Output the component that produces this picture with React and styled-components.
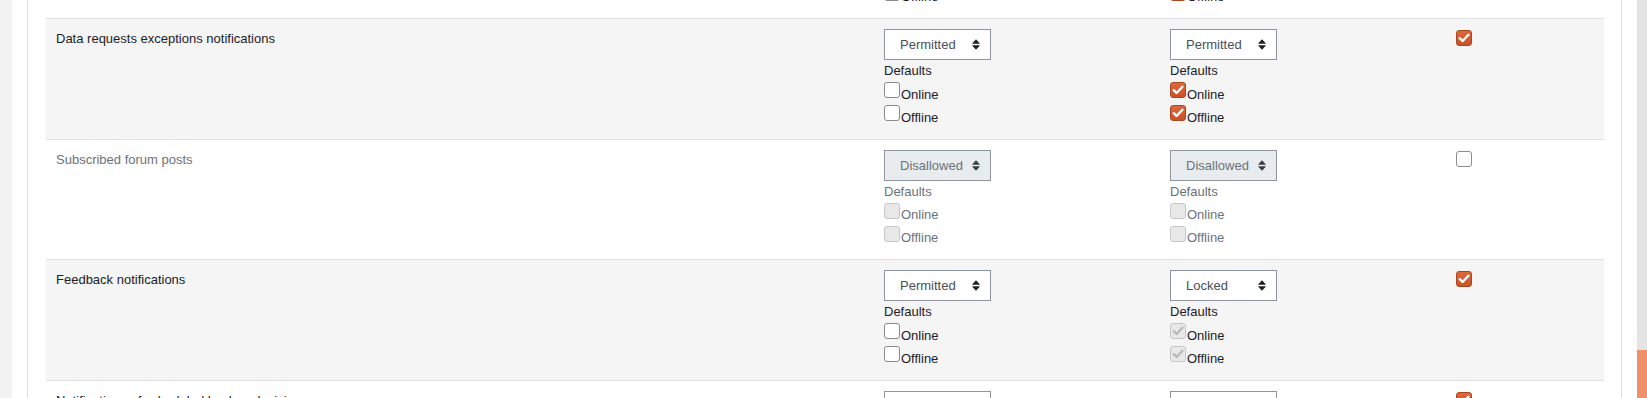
import React from "react";
import styled, { createGlobalStyle } from "styled-components";

const GlobalStyle = createGlobalStyle`
  html, body { margin: 0; padding: 0; background: #ffffff; overflow: hidden; }
  body { font-family: "Liberation Sans", Arial, sans-serif; font-size: 13px; color: #1d2125; }
`;

const Page = styled.div`
  display: flex;
  height: 100vh;
  overflow: hidden;
`;

const Drawer = styled.div`
  width: 12px;
  flex-shrink: 0;
  background: #f2f2f2;
`;

const Gutter = styled.div`
  width: 15px;
  flex-shrink: 0;
  background: #ffffff;
`;

const Card = styled.div`
  flex: 1;
  border-left: 1px solid #dee2e6;
  border-right: 1px solid #dee2e6;
  padding: 0 17px 0 18px;
  overflow: hidden;
  min-width: 0;
`;

const Scrollbar = styled.div`
  width: 10px;
  flex-shrink: 0;
  background: #e4e4e4;
  display: flex;
  flex-direction: column;
  justify-content: flex-end;
`;

const Thumb = styled.div`
  height: 48px;
  background: #f0906a;
`;

const Table = styled.div`
  margin-top: -102.5px;
`;

const Row = styled.div`
  display: grid;
  grid-template-columns: 828px 286px 286px 1fr;
  border-top: 1px solid #dee2e6;
  background: ${(p) => (p.$striped ? "#f5f5f5" : "#ffffff")};
`;

const Cell = styled.div`
  padding: 10px 10px 11.5px 10px;
  color: ${(p) => (p.$disabled ? "#6a737b" : "#1d2125")};
`;

const Label = styled.div`
  line-height: 19.5px;
`;

const SelectBox = styled.div`
  width: 107px;
  height: 31px;
  box-sizing: border-box;
  border: 1px solid #8f959e;
  background: ${(p) => (p.$disabled ? "#e9ecef" : "#ffffff")};
  color: ${(p) => (p.$disabled ? "#6a737b" : "#495057")};
  display: flex;
  align-items: center;
  justify-content: space-between;
  padding: 0 10px 0 15px;
  font-size: 13px;
`;

const Arrow = styled.svg`
  width: 8px;
  height: 11px;
  flex-shrink: 0;
  fill: ${(p) => (p.$disabled ? "#3a3f44" : "#1d2125")};
`;

const DefaultsLabel = styled.div`
  line-height: 21px;
  height: 21px;
`;

const Option = styled.div`
  display: flex;
  align-items: flex-start;
  height: 23px;
`;

const OptionText = styled.span`
  line-height: 20px;
  padding-top: 3.5px;
  margin-left: 1px;
`;

const Box = styled.span`
  width: 16px;
  height: 16px;
  box-sizing: border-box;
  margin-top: 1px;
  flex-shrink: 0;
  border-radius: 3px;
  display: inline-flex;
  align-items: center;
  justify-content: center;
  border: 1px solid
    ${(p) => (p.$disabled ? "#c7c7c7" : p.$checked ? "#a9461f" : "#8b8b8b")};
  background: ${(p) =>
    p.$disabled
      ? "#e8e8e8"
      : p.$checked
      ? "linear-gradient(#dc683b, #c9522a)"
      : "#ffffff"};
`;

const Check = styled.svg`
  width: 12px;
  height: 12px;
  fill: none;
  stroke: ${(p) => (p.$disabled ? "#b9b9b9" : "#ffffff")};
  stroke-width: 2.4;
  stroke-linecap: round;
  stroke-linejoin: round;
`;

function Checkbox({ checked, disabled }) {
  return (
    <Box $checked={checked} $disabled={disabled}>
      {checked && (
        <Check viewBox="0 0 12 12" $disabled={disabled}>
          <polyline points="1.8,6.2 4.6,9 10.4,2.8" />
        </Check>
      )}
    </Box>
  );
}

function Select({ value, disabled }) {
  return (
    <SelectBox $disabled={disabled}>
      <span>{value}</span>
      <Arrow viewBox="0 0 8 11" $disabled={disabled}>
        <path d="M4 0.3 L7.7 4.3 Q8 4.7 7.5 4.7 L0.5 4.7 Q0 4.7 0.3 4.3 Z" />
        <path d="M4 10.7 L7.7 6.7 Q8 6.3 7.5 6.3 L0.5 6.3 Q0 6.3 0.3 6.7 Z" />
      </Arrow>
    </SelectBox>
  );
}

function Output({ value, online, offline, disabled, lockedBoxes }) {
  const boxDisabled = disabled || lockedBoxes;
  return (
    <Cell $disabled={disabled}>
      <Select value={value} disabled={disabled} />
      <DefaultsLabel>Defaults</DefaultsLabel>
      <Option>
        <Checkbox checked={online} disabled={boxDisabled} />
        <OptionText>Online</OptionText>
      </Option>
      <Option>
        <Checkbox checked={offline} disabled={boxDisabled} />
        <OptionText>Offline</OptionText>
      </Option>
    </Cell>
  );
}

const rows = [
  {
    label: "Data requests",
    striped: false,
    web: { value: "Permitted", online: false, offline: false },
    email: { value: "Permitted", online: true, offline: true },
    enabled: true,
  },
  {
    label: "Data requests exceptions notifications",
    striped: true,
    web: { value: "Permitted", online: false, offline: false },
    email: { value: "Permitted", online: true, offline: true },
    enabled: true,
  },
  {
    label: "Subscribed forum posts",
    striped: false,
    disabled: true,
    web: { value: "Disallowed", online: false, offline: false },
    email: { value: "Disallowed", online: false, offline: false },
    enabled: false,
  },
  {
    label: "Feedback notifications",
    striped: true,
    web: { value: "Permitted", online: false, offline: false },
    email: { value: "Locked", online: true, offline: true, locked: true },
    enabled: true,
  },
  {
    label: "Notifications of scheduled backup decisions",
    striped: false,
    web: { value: "Permitted", online: false, offline: false },
    email: { value: "Permitted", online: true, offline: true },
    enabled: true,
  },
];

export default function App() {
  return (
    <>
      <GlobalStyle />
      <Page>
        <Drawer />
        <Gutter />
        <Card>
          <Table>
            {rows.map((r) => (
              <Row key={r.label} $striped={r.striped}>
                <Cell $disabled={r.disabled}>
                  <Label>{r.label}</Label>
                </Cell>
                <Output
                  value={r.web.value}
                  online={r.web.online}
                  offline={r.web.offline}
                  disabled={r.disabled}
                />
                <Output
                  value={r.email.value}
                  online={r.email.online}
                  offline={r.email.offline}
                  disabled={r.disabled}
                  lockedBoxes={r.email.locked}
                />
                <Cell>
                  <Checkbox checked={r.enabled} />
                </Cell>
              </Row>
            ))}
          </Table>
        </Card>
        <Gutter />
        <Scrollbar>
          <Thumb />
        </Scrollbar>
      </Page>
    </>
  );
}
